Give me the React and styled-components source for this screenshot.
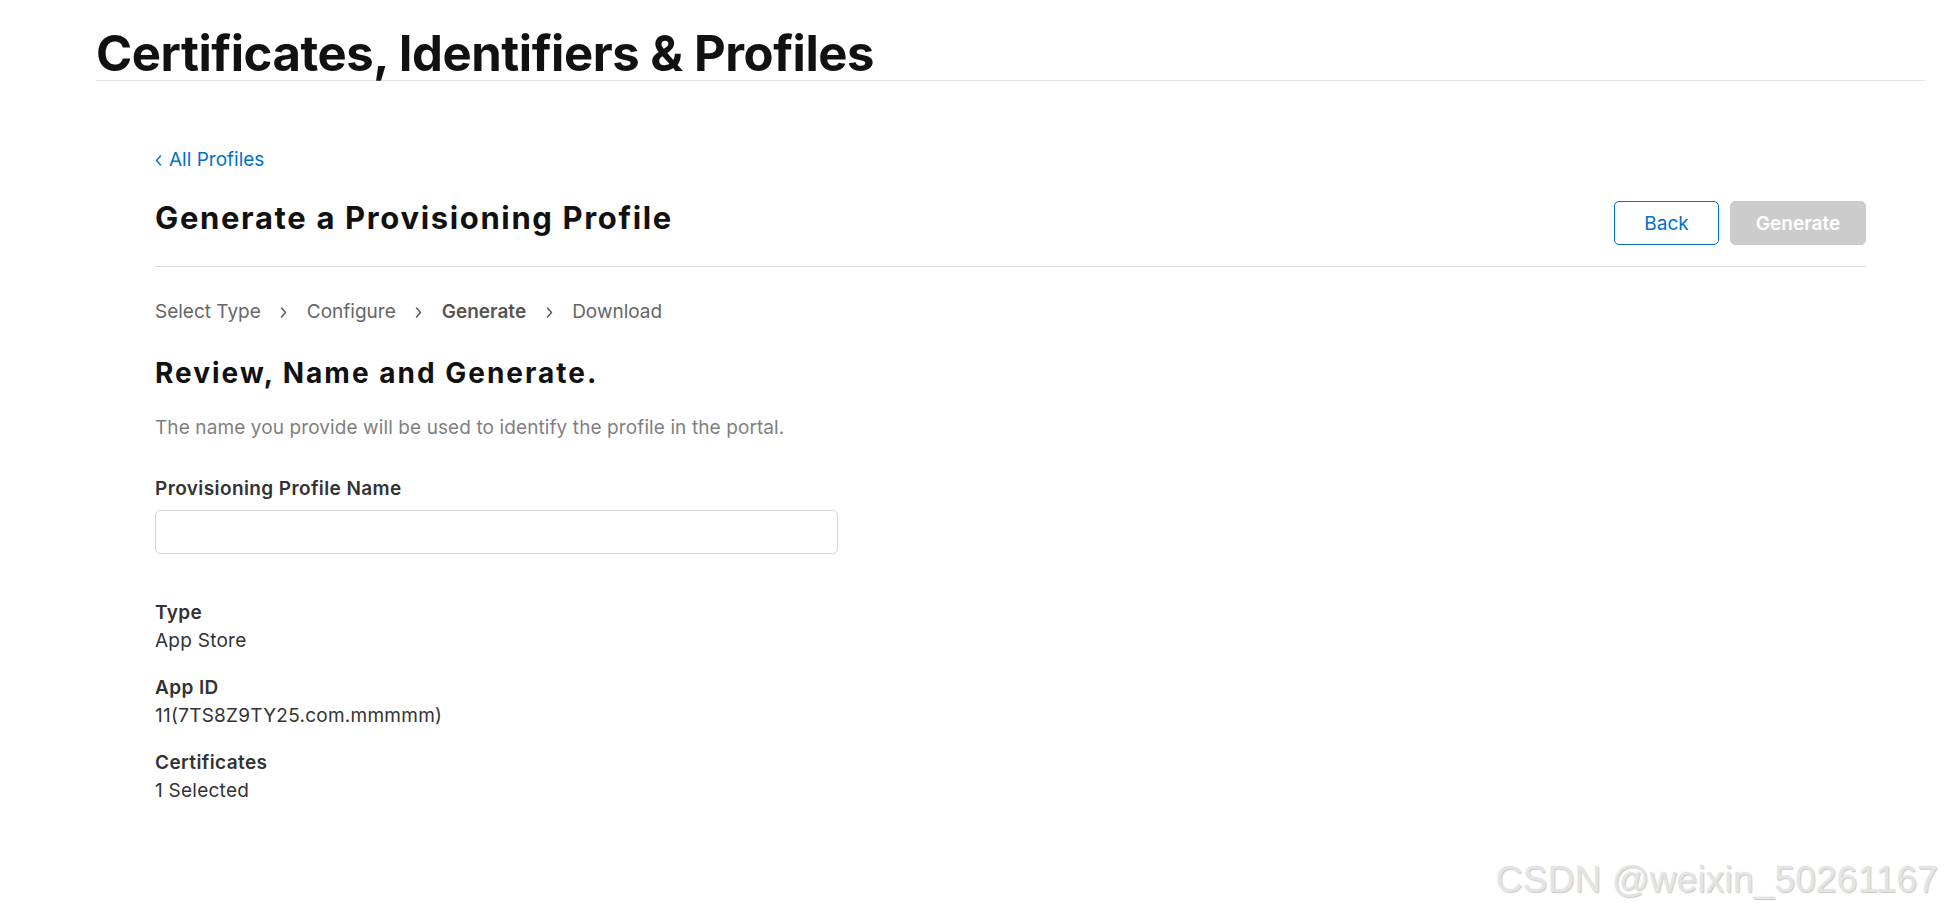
import React from "react";
import styled, { createGlobalStyle } from "styled-components";

const Global = createGlobalStyle`
  html, body { margin: 0; padding: 0; background: #fff; }
  body { font-family: Inter, "Noto Sans", sans-serif; color: #333; -webkit-font-smoothing: antialiased; }
  * { box-sizing: border-box; }
`;

const Page = styled.div`
  position: relative;
  width: 1945px;
  height: 910px;
  overflow: hidden;
  background: #fff;
`;

const TopHeader = styled.header`
  margin: 0 20px 0 96px;
  padding-top: 28px;
  border-bottom: 1px solid #e3e3e3;
`;

const SiteTitle = styled.h1`
  margin: 0;
  font-size: 49px;
  line-height: 52px;
  font-weight: 700;
  color: #111;
  letter-spacing: -0.45px;
`;

const Main = styled.main`
  margin: 0 79px 0 155px;
  padding-top: 67px;
`;

const BackLink = styled.a`
  display: flex;
  width: fit-content;
  align-items: center;
  gap: 7px;
  font-size: 19px;
  line-height: 24px;
  color: #0070c9;
  text-decoration: none;
`;

const TitleRow = styled.div`
  display: flex;
  align-items: flex-start;
  justify-content: space-between;
  margin-top: 29px;
  padding-bottom: 21px;
  border-bottom: 1px solid #dcdcdc;
`;

const PageTitle = styled.h2`
  margin: 0;
  font-size: 31px;
  line-height: 34px;
  font-weight: 700;
  color: #111;
  letter-spacing: 1.65px;
`;

const Actions = styled.div`
  display: flex;
  gap: 11px;
`;

const Button = styled.button`
  height: 44px;
  width: ${(p) => p.$w}px;
  border-radius: 5px;
  font-family: Inter, sans-serif;
  font-size: 19px;
  cursor: pointer;
  border: 1px solid ${(p) => (p.$primary ? "#cccccc" : "#0070c9")};
  background: ${(p) => (p.$primary ? "#cccccc" : "#fff")};
  color: ${(p) => (p.$primary ? "#fff" : "#0070c9")};
  font-weight: ${(p) => (p.$primary ? 600 : 400)};
`;

const Steps = styled.nav`
  display: flex;
  align-items: center;
  margin-top: 33px;
  font-size: 19px;
  line-height: 24px;
  color: #666;
`;

const Step = styled.span`
  font-weight: ${(p) => (p.$active ? 600 : 400)};
  color: ${(p) => (p.$active ? "#555" : "#666")};
`;

const Sep = styled.span`
  display: inline-flex;
  width: 46px;
  justify-content: center;
  align-items: center;
  color: #555;
`;

const SectionTitle = styled.h3`
  margin: 32px 0 0;
  font-size: 28px;
  line-height: 34px;
  font-weight: 700;
  color: #111;
  letter-spacing: 2px;
`;

const Description = styled.p`
  margin: 26px 0 0;
  font-size: 19px;
  line-height: 24px;
  color: #808080;
  letter-spacing: 0.1px;
`;

const FieldLabel = styled.label`
  display: block;
  margin-top: 37px;
  font-size: 19px;
  line-height: 24px;
  font-weight: 600;
  color: #333;
  letter-spacing: 0.4px;
`;

const TextInput = styled.input`
  display: block;
  margin-top: 9px;
  width: 683px;
  height: 44px;
  border: 1px solid #d6d6d6;
  border-radius: 5px;
  font-size: 19px;
  padding: 0 12px;
  outline: none;
`;

const Details = styled.dl`
  margin: 45px 0 0;
  display: flex;
  flex-direction: column;
  gap: 19px;
`;

const DetailGroup = styled.div``;

const DetailTerm = styled.dt`
  font-size: 19px;
  line-height: 28px;
  font-weight: 600;
  color: #333;
  letter-spacing: 0.4px;
`;

const DetailValue = styled.dd`
  margin: 0;
  font-size: 19px;
  line-height: 28px;
  color: #333;
  letter-spacing: 0.25px;
`;

const Watermark = styled.div`
  position: absolute;
  right: 7px;
  bottom: 10px;
  font-family: "Liberation Sans", Arial, sans-serif;
  font-size: 37px;
  line-height: 40px;
  color: #e4e4e4;
  text-shadow: 1px 1px 1px #c8c8c8, -1px -1px 0 #fafafa;
  letter-spacing: 0.2px;
`;

const Chevron = ({ left }) => (
  <svg width="7" height="11" viewBox="0 0 7 11" fill="none">
    <path
      d={left ? "M5.5 1 L1.5 5.5 L5.5 10" : "M1.5 1 L5.5 5.5 L1.5 10"}
      stroke="currentColor"
      strokeWidth="1.4"
      strokeLinecap="round"
      strokeLinejoin="round"
    />
  </svg>
);

export default function App() {
  return (
    <Page>
      <Global />
      <TopHeader>
        <SiteTitle>Certificates, Identifiers &amp; Profiles</SiteTitle>
      </TopHeader>
      <Main>
        <BackLink href="#">
          <Chevron left />
          All Profiles
        </BackLink>
        <TitleRow>
          <PageTitle>Generate a Provisioning Profile</PageTitle>
          <Actions>
            <Button $w={105}>Back</Button>
            <Button $w={136} $primary>Generate</Button>
          </Actions>
        </TitleRow>
        <Steps>
          <Step>Select Type</Step>
          <Sep><Chevron /></Sep>
          <Step>Configure</Step>
          <Sep><Chevron /></Sep>
          <Step $active>Generate</Step>
          <Sep><Chevron /></Sep>
          <Step>Download</Step>
        </Steps>
        <SectionTitle>Review, Name and Generate.</SectionTitle>
        <Description>The name you provide will be used to identify the profile in the portal.</Description>
        <FieldLabel htmlFor="pname">Provisioning Profile Name</FieldLabel>
        <TextInput id="pname" type="text" />
        <Details>
          <DetailGroup>
            <DetailTerm>Type</DetailTerm>
            <DetailValue>App Store</DetailValue>
          </DetailGroup>
          <DetailGroup>
            <DetailTerm>App ID</DetailTerm>
            <DetailValue>11(7TS8Z9TY25.com.mmmmm)</DetailValue>
          </DetailGroup>
          <DetailGroup>
            <DetailTerm>Certificates</DetailTerm>
            <DetailValue>1 Selected</DetailValue>
          </DetailGroup>
        </Details>
      </Main>
      <Watermark>CSDN @weixin_50261167</Watermark>
    </Page>
  );
}
